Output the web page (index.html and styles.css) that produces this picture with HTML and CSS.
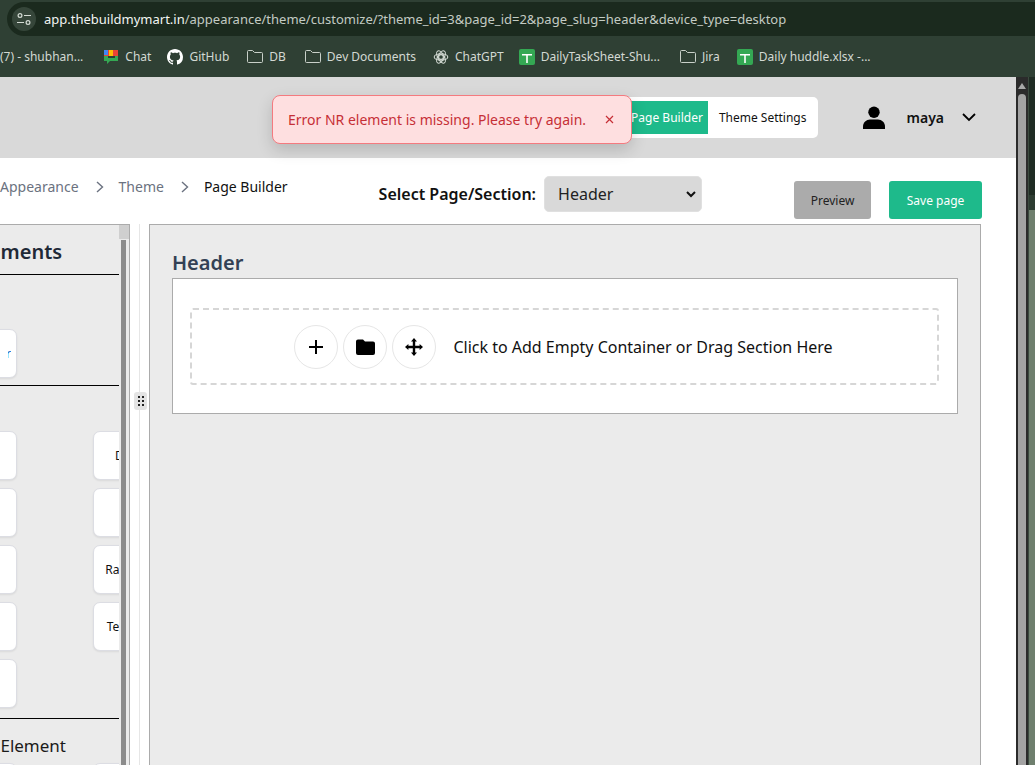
FILE: index.html
```html
<!DOCTYPE html>
<html lang="en">
<head>
<meta charset="utf-8">
<title>Page Builder</title>
<link rel="stylesheet" href="styles.css">
</head>
<body>
<div class="browser">
  <div class="addressbar">
    <div class="omnibox">
      <span class="site-icon">
        <svg width="16" height="14" viewBox="0 0 16 14" fill="none" stroke="#d5dcd5" stroke-width="1.2"><circle cx="4" cy="3.5" r="1.9"/><path d="M8 3.5h7M1 10.5h7"/><circle cx="12" cy="10.5" r="1.9"/></svg>
      </span>
      <span class="url"><b>app.thebuildmymart.in</b>/appearance/theme/customize/?theme_id=3&amp;page_id=2&amp;page_slug=header&amp;device_type=desktop</span>
    </div>
  </div>
  <div class="bookmarks">
    <span class="bm bm-first">(7) - shubhan...</span>
    <span class="bm bm-chat">
      <svg width="16" height="16" viewBox="0 0 16 16"><rect x="1" y="1" width="5" height="6" fill="#ea4335"/><rect x="6" y="1" width="5" height="6" fill="#fbbc04"/><rect x="10" y="1" width="5" height="6" fill="#ea4335"/><rect x="1" y="1" width="4" height="5" fill="#4285f4"/><path d="M1 7h14v5H7l-3 3v-3H1z" fill="#34a853"/><rect x="5" y="7" width="7" height="2" fill="#2c3e33"/></svg>Chat</span>
    <span class="bm bm-gh">
      <svg width="16" height="16" viewBox="0 0 16 16" fill="#fff"><path d="M8 0C3.58 0 0 3.58 0 8c0 3.54 2.29 6.53 5.47 7.59.4.07.55-.17.55-.38 0-.19-.01-.82-.01-1.49-2.01.37-2.53-.49-2.69-.94-.09-.23-.48-.94-.82-1.13-.28-.15-.68-.52-.01-.53.63-.01 1.08.58 1.23.82.72 1.21 1.87.87 2.33.66.07-.52.28-.87.51-1.07-1.78-.2-3.64-.89-3.64-3.95 0-.87.31-1.59.82-2.15-.08-.2-.36-1.02.08-2.12 0 0 .67-.21 2.2.82.64-.18 1.32-.27 2-.27s1.36.09 2 .27c1.53-1.04 2.2-.82 2.2-.82.44 1.1.16 1.92.08 2.12.51.56.82 1.27.82 2.15 0 3.07-1.87 3.75-3.65 3.95.29.25.54.73.54 1.48 0 1.07-.01 1.93-.01 2.2 0 .21.15.46.55.38A8.01 8.01 0 0 0 16 8c0-4.42-3.58-8-8-8z"/></svg>GitHub</span>
    <span class="bm bm-db">
      <svg class="folder" width="16" height="13" viewBox="0 0 16 13" fill="none" stroke="#c9d0c9" stroke-width="1"><path d="M.5 11.5v-10a1 1 0 0 1 1-1h4l2 2h7a1 1 0 0 1 1 1v8a1 1 0 0 1-1 1h-13a1 1 0 0 1-1-1z"/></svg>DB</span>
    <span class="bm bm-dev">
      <svg class="folder" width="16" height="13" viewBox="0 0 16 13" fill="none" stroke="#c9d0c9" stroke-width="1"><path d="M.5 11.5v-10a1 1 0 0 1 1-1h4l2 2h7a1 1 0 0 1 1 1v8a1 1 0 0 1-1 1h-13a1 1 0 0 1-1-1z"/></svg>Dev Documents</span>
    <span class="bm bm-gpt">
      <svg width="16" height="16" viewBox="0 0 16 16" fill="none" stroke="#d5dcd5" stroke-width="1.1"><circle cx="8" cy="8" r="2.4"/><ellipse cx="8" cy="8" rx="6.8" ry="3.2"/><ellipse cx="8" cy="8" rx="6.8" ry="3.2" transform="rotate(60 8 8)"/><ellipse cx="8" cy="8" rx="6.8" ry="3.2" transform="rotate(120 8 8)"/></svg>ChatGPT</span>
    <span class="bm bm-sheet">
      <svg width="16" height="16" viewBox="0 0 16 16"><rect width="16" height="16" rx="2" fill="#34a853"/><path d="M3 5h10v1.6H8.8V14H7.2V6.6H3z" fill="#fff"/></svg>DailyTaskSheet-Shu...</span>
    <span class="bm bm-jira">
      <svg class="folder" width="16" height="13" viewBox="0 0 16 13" fill="none" stroke="#c9d0c9" stroke-width="1"><path d="M.5 11.5v-10a1 1 0 0 1 1-1h4l2 2h7a1 1 0 0 1 1 1v8a1 1 0 0 1-1 1h-13a1 1 0 0 1-1-1z"/></svg>Jira</span>
    <span class="bm bm-huddle">
      <svg width="16" height="16" viewBox="0 0 16 16"><rect width="16" height="16" rx="2" fill="#34a853"/><path d="M3 5h10v1.6H8.8V14H7.2V6.6H3z" fill="#fff"/></svg>Daily huddle.xlsx -...</span>
  </div>
  <div class="viewport">
    <div class="page">
      <header class="topbar">
        <div class="tabs">
          <span class="tab tab-active">Page Builder</span>
          <span class="tab">Theme Settings</span>
        </div>
        <div class="user">
          <svg width="24" height="24" viewBox="0 0 24 24" fill="#000"><circle cx="12" cy="6.2" r="5.7"/><path d="M1 23v-2.5C1 16.4 4.4 13.5 8 13.5h8c3.6 0 7 2.9 7 7V23z"/></svg>
          <span class="username">maya</span>
          <svg width="14" height="9" viewBox="0 0 14 9" fill="none" stroke="#000" stroke-width="1.8"><path d="M1 1l6 6 6-6"/></svg>
        </div>
      </header>
      <div class="toolbar">
        <nav class="crumbs">
          <span class="crumb crumb-muted">Appearance</span>
          <svg class="sep" width="8" height="12" viewBox="0 0 8 12" fill="none" stroke="#6b7280" stroke-width="1.4"><path d="M1 1l5.5 5L1 11"/></svg>
          <span class="crumb crumb-muted">Theme</span>
          <svg class="sep" width="8" height="12" viewBox="0 0 8 12" fill="none" stroke="#6b7280" stroke-width="1.4"><path d="M1 1l5.5 5L1 11"/></svg>
          <span class="crumb">Page Builder</span>
        </nav>
        <div class="picker">
          <label class="picker-label">Select Page/Section:</label>
          <div class="fake-select">Header
            <svg width="10" height="7" viewBox="0 0 10 7" fill="none" stroke="#111" stroke-width="2"><path d="M1 1l4 4 4-4"/></svg>
          </div>
        </div>
        <div class="actions">
          <span class="btn btn-preview">Preview</span>
          <span class="btn btn-save">Save page</span>
        </div>
      </div>
      <div class="workspace">
        <aside class="sidebar">
          <div class="side-scroll">
            <div class="side-inner">
              <h2 class="side-title">Elements</h2>
              <div class="rule"></div>
              <div class="row row-first">
                <div class="card card-cut card-container"><span class="blue">Container</span></div>
              </div>
              <div class="rule"></div>
              <div class="grid">
                <div class="card card-cut"></div><div class="card"><span>Divider</span></div>
                <div class="card card-cut"></div><div class="card"><span>Icon</span></div>
                <div class="card card-cut"></div><div class="card"><span>Raw HTML</span></div>
                <div class="card card-cut"></div><div class="card"><span>Text Block</span></div>
                <div class="card card-cut"></div>
              </div>
              <div class="rule rule-last"></div>
              <div class="side-sub">Form Element</div>
              <div class="grid grid-last">
                <div class="card card-cut"></div><div class="card"></div>
              </div>
            </div>
          </div>
          <div class="side-bar-track"><div class="side-thumb-top"></div><div class="side-thumb"></div></div>
        </aside>
        <div class="splitter"><span class="grip">
          <svg width="6" height="10" viewBox="0 0 6 10" fill="#222"><rect width="2" height="2"/><rect x="4" width="2" height="2"/><rect y="4" width="2" height="2"/><rect x="4" y="4" width="2" height="2"/><rect y="8" width="2" height="2"/><rect x="4" y="8" width="2" height="2"/></svg>
        </span></div>
        <main class="canvas">
          <h2 class="canvas-title">Header</h2>
          <div class="section">
            <div class="dropzone">
              <span class="circle">
                <svg width="16" height="16" viewBox="0 0 16 16" stroke="#000" stroke-width="2"><path d="M8 1v14M1 8h14"/></svg>
              </span>
              <span class="circle">
                <svg width="19" height="16" viewBox="0 0 19 16" fill="#000"><path d="M0 2.5A2 2 0 0 1 2 .5h5l2 2h8a2 2 0 0 1 2 2V14a2 2 0 0 1-2 2H2a2 2 0 0 1-2-2z"/></svg>
              </span>
              <span class="circle">
                <svg width="18" height="18" viewBox="0 0 18 18" fill="#000"><path d="M9 0l3 3.4H10.2V7.8H14.6V6L18 9l-3.4 3v-1.8H10.2v4.400H12L9 18l-3-3.400h1.800V10.200H3.400V12L0 9l3.400-3v1.800H7.800V3.400H6z"/></svg>
              </span>
              <span class="dz-text">Click to Add Empty Container or Drag Section Here</span>
            </div>
          </div>
        </main>
      </div>
      <div class="toast">
        <span>Error NR element is missing. Please try again.</span>
        <svg width="9" height="9" viewBox="0 0 9 9" stroke="#c62f36" stroke-width="1.2"><path d="M1 1l7 7M8 1l-7 7"/></svg>
      </div>
    </div>
    <div class="scrollbar"><div class="sb-arrow"></div><div class="sb-thumb"></div></div>
    <div class="outside"><div class="outside-a"></div><div class="outside-b"></div></div>
  </div>
</div>
</body>
</html>
```
FILE: styles.css
```css
* { box-sizing: border-box; }
html, body { margin: 0; padding: 0; }
body { width: 1035px; height: 765px; overflow: hidden; font-family: "Noto Sans", "Open Sans", sans-serif; color: #111; background: #fff; }
.browser { width: 1035px; height: 765px; display: flex; flex-direction: column; overflow: hidden; }

.addressbar { height: 36px; background: #2f4034; padding-top: 2px; }
.omnibox { height: 34px; background: #1b2a1e; border-radius: 17px 0 0 17px; margin-left: 7px; display: flex; align-items: center; padding-left: 5px; }
.site-icon { width: 24px; height: 24px; border-radius: 50%; background: #36463a; display: flex; align-items: center; justify-content: center; }
.url { margin-left: 8px; font-size: 13px; color: #c3cbc3; white-space: nowrap; }
.url b { font-weight: 400; color: #f2f5f2; }

.bookmarks { height: 41px; background: #2f4034; display: flex; align-items: center; font-size: 12px; color: #d3d9d3; white-space: nowrap; }
.bm { display: flex; align-items: center; gap: 6px; }
.bm-first { margin-left: 0; }
.bm-chat { margin-left: 20px; }
.bm-gh { margin-left: 16px; }
.bm-db { margin-left: 18px; }
.bm-dev { margin-left: 19px; }
.bm-gpt { margin-left: 17px; }
.bm-sheet { margin-left: 15px; }
.bm-jira { margin-left: 20px; }
.bm-huddle { margin-left: 17px; }

.viewport { flex: 1; display: flex; min-height: 0; }
.page { position: relative; width: 1016px; display: flex; flex-direction: column; background: #fff; overflow: hidden; }

.topbar { height: 81px; flex: none; background: #d9d9d9; display: flex; align-items: center; justify-content: flex-end; padding-right: 40px; }
.tabs { display: flex; align-items: center; height: 41px; background: #fff; border-radius: 5px; padding: 4px 0; }
.tab { font-size: 12px; padding: 0 11px; display: flex; align-items: center; height: 33px; }
.tab-active { background: #1eba8b; color: #fff; padding: 0 5px 0 28px; }
.user { display: flex; align-items: center; margin-left: 44px; }
.username { font-size: 14px; font-weight: 600; margin-left: 21px; margin-right: 18px; }

.toolbar { position: relative; height: 66px; flex: none; display: flex; align-items: flex-start; }
.crumbs { display: flex; align-items: center; font-size: 14px; margin-top: 19px; }
.crumb-muted { color: #6b7280; }
.sep { margin: 0 15px 0 17px; }
.picker { display: flex; align-items: center; margin: 18px 0 0 91px; }
.picker-label { font-size: 16px; font-weight: 600; }
.fake-select { width: 158px; height: 36px; background: #d9d9d9; border: 1px solid #e0e0e0; border-radius: 5px; margin-left: 8px; display: flex; align-items: center; justify-content: space-between; padding: 0 5px 0 13px; font-size: 16px; color: #222; }
.actions { display: flex; margin: 23px 0 0 92px; gap: 18px; }
.btn { height: 38px; display: flex; align-items: center; justify-content: center; font-size: 12px; border-radius: 3px; }
.btn-preview { width: 77px; background: #ababab; color: #222; }
.btn-save { width: 93px; background: #1eba8b; color: #fff; }

.workspace { flex: 1; display: flex; min-height: 0; }
.sidebar { width: 130px; flex: none; display: flex; background: #ebebeb; border: 1px solid #ababab; border-left: 0; border-bottom: 0; overflow: hidden; }
.side-scroll { width: 119px; flex: none; overflow: hidden; }
.side-inner { width: 119px; padding-top: 14px; }
.side-title { margin: 0 0 9px -28px; font-size: 20px; line-height: 26px; font-weight: 600; color: #1f2937; white-space: nowrap; direction: ltr; }
.rule { height: 1px; background: #000; }
.row-first { height: 110px; display: flex; align-items: flex-start; padding-top: 54px; }
.row-first { height: 110px; }
.card { width: 84px; height: 49px; background: #fff; border: 1px solid #dcdde3; border-radius: 7px; box-shadow: 0 1px 2px rgba(0,0,0,.08); display: flex; align-items: center; justify-content: center; font-size: 12px; white-space: nowrap; }
.card-cut { margin-left: -67px; }
.card-container { justify-content: flex-end; padding-right: 5px; }
.blue { color: #0b5cc4; width: 3px; overflow: hidden; direction: rtl; }
.grid { display: grid; grid-template-columns: 84px 84px; column-gap: 9px; row-gap: 8px; padding-top: 45px; }
.rule-last { margin-top: 8px; margin-top: 10px; }
.side-sub { font-size: 17px; line-height: 24px; margin: 15px 0 5px -46px; white-space: nowrap; color: #1a1a1a; }
.grid-last { padding-top: 0; }
.side-bar-track { width: 10px; flex: none; background: #ebebeb; position: relative; }
.side-thumb-top { height: 14px; width: 10px; background: #cfcfcf; }
.side-thumb { height: 100%; width: 5px; background: #8c8c8c; margin: 1px 0 0 2px; }

.splitter { width: 19px; flex: none; background: #fff; position: relative; display: flex; justify-content: center; }
.splitter::before { content: ""; width: 1px; background: #e6e6e6; height: 100%; }
.grip { position: absolute; left: 4px; top: 168px; width: 13px; height: 18px; background: #e4e4e4; border-radius: 3px; display: flex; align-items: center; justify-content: center; }

.canvas { width: 832px; flex: none; background: #ebebeb; border: 1px solid #ababab; border-bottom: 0; padding: 22px 22px 0 22px; }
.canvas-title { margin: 0; font-size: 20px; line-height: 31px; font-weight: 600; color: #334155; }
.section { height: 136px; background: #fff; border: 1px solid #ababab; padding: 29px 18px 0 17px; }
.dropzone { height: 77px; border: 2px dashed #d6d6d6; border-radius: 3px; display: flex; align-items: center; justify-content: center; gap: 5px; padding-right: 2px; }
.circle { width: 44px; height: 44px; border: 1px solid #e6e6e6; border-radius: 50%; display: flex; align-items: center; justify-content: center; background: #fff; }
.dz-text { font-size: 16px; margin-left: 12px; color: #111; }

.toast { position: absolute; left: 272px; top: 18px; width: 360px; height: 49px; background: #fedfe0; border: 1px solid #f47a7f; border-radius: 8px; box-shadow: 0 6px 16px rgba(0,0,0,.16); display: flex; align-items: center; justify-content: space-between; padding: 0 17px 0 15px; font-size: 14px; color: #c62f36; }

.scrollbar { width: 12px; flex: none; background: #2b2b2b; position: relative; padding: 0 2px; }
.sb-arrow { width: 0; height: 0; margin: 6px auto 0; border-left: 4px solid transparent; border-right: 4px solid transparent; border-bottom: 6px solid #a8a8a8; }
.sb-thumb { height: 100%; background: #a3a3a3; border-radius: 5px 5px 0 0; margin-top: 5px; }
.outside { flex: 1; display: flex; flex-direction: column; background: #2d3c31; border-left: 1px solid #3b4a3f; }
.outside-a { height: 118px; background: #1f2c23; }
.outside-b { flex: 1; background: #6f7f6e; margin-top: 15px; }
```
